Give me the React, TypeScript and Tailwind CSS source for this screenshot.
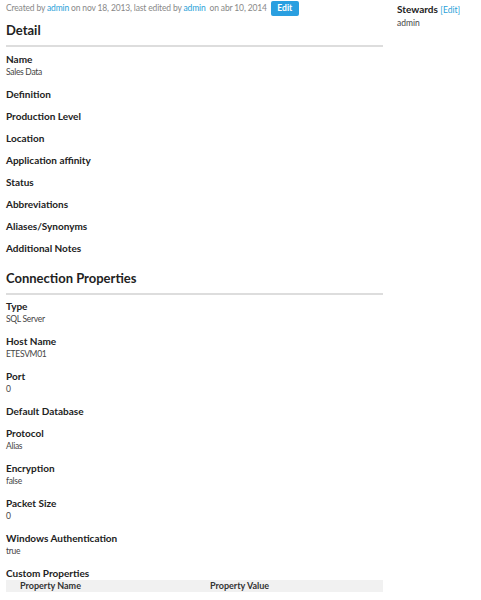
import React from "react";

type Field = { label: string; value?: string };

const detail: Field[] = [
  { label: "Name", value: "Sales Data" },
  { label: "Definition" },
  { label: "Production Level" },
  { label: "Location" },
  { label: "Application affinity" },
  { label: "Status" },
  { label: "Abbreviations" },
  { label: "Aliases/Synonyms" },
  { label: "Additional Notes" },
];

const conn: Field[] = [
  { label: "Type", value: "SQL Server" },
  { label: "Host Name", value: "ETESVM01" },
  { label: "Port", value: "0" },
  { label: "Default Database" },
  { label: "Protocol", value: "Alias" },
  { label: "Encryption", value: "false" },
  { label: "Packet Size", value: "0" },
  { label: "Windows Authentication", value: "true" },
];

function FieldList({ items }: { items: Field[] }) {
  return (
    <div className="flex flex-col">
      {items.map((f) => (
        <div key={f.label} className="mb-[9px]">
          <div className="text-[10px] leading-[13px] font-bold text-[#222]">{f.label}</div>
          {f.value && (
            <div className="text-[8.5px] leading-[13px] tracking-[-0.3px] text-[#444]">{f.value}</div>
          )}
        </div>
      ))}
    </div>
  );
}

export default function App() {
  return (
    <div className="flex bg-white min-h-[600px] pl-[6px]" style={{ fontFamily: "Lato, 'Open Sans', sans-serif" }}>
      <div className="w-[377px] flex flex-col">
        <div className="flex items-center h-[16px] text-[8.5px] tracking-[-0.15px] text-[#888]">
          <span>
            Created by <span className="text-[#2a9fd8]">admin</span> on nov 18, 2013, last edited by{" "}
            <span className="text-[#2a9fd8]">admin</span>&nbsp; on abr 10, 2014
          </span>
          <span className="ml-[4px] inline-flex items-center justify-center w-[28px] h-[15px] rounded-[2px] bg-[#2a9fe0] text-white text-[8.5px] font-bold tracking-normal">
            Edit
          </span>
        </div>
        <h2 className="text-[13px] font-bold text-[#222] leading-[20px] mt-[4px]">Detail</h2>
        <div className="h-[2px] bg-[#ddd] mt-[5px] mb-[6px]" />
        <FieldList items={detail} />
        <h2 className="text-[13px] font-bold text-[#222] leading-[20px] mt-[4px]">Connection Properties</h2>
        <div className="h-[2px] bg-[#ddd] mt-[5px] mb-[5px]" />
        <FieldList items={conn} />
        <div className="text-[10px] leading-[13px] font-bold text-[#222]">Custom Properties</div>
        <div className="flex bg-[#f1f1f1] h-[12px] items-center text-[9px] font-bold text-[#333]">
          <div className="w-[190px] pl-[14px]">Property Name</div>
          <div className="pl-[14px]">Property Value</div>
        </div>
      </div>
      <div className="ml-[14px] pt-[3px]">
        <div className="text-[10px] leading-[13px] font-bold text-[#222]">
          Stewards <span className="font-normal text-[8.5px] text-[#2a9fd8]">[Edit]</span>
        </div>
        <div className="text-[8.5px] leading-[13px] text-[#444]">admin</div>
      </div>
    </div>
  );
}
